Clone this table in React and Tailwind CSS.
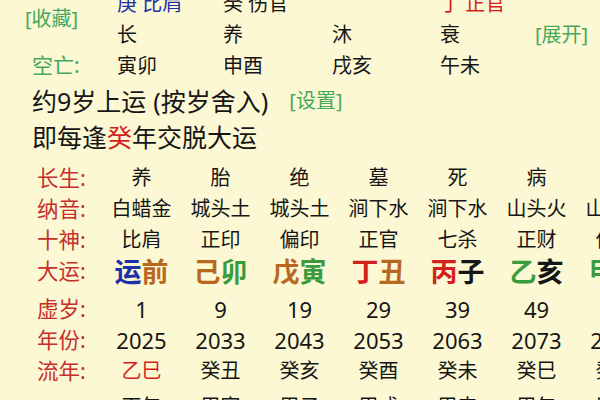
import React from 'react';

const red = 'text-[#c62f2c]';
const green = 'text-[#47a85c]';
const C = {
  blue: 'text-[#1f2fa8]',
  brown: 'text-[#b9681f]',
  green: 'text-[#3a9b3e]',
  red: 'text-[#d41f1f]',
  black: 'text-[#161616]',
};

const tableRows = [
  { label: '长生:', cells: ['养', '胎', '绝', '墓', '死', '病', '衰'] },
  { label: '纳音:', cells: ['白蜡金', '城头土', '城头土', '涧下水', '涧下水', '山头火', '山头火'] },
  { label: '十神:', cells: ['比肩', '正印', '偏印', '正官', '七杀', '正财', '偏财'] },
];

const dayun = [
  [['运', 'blue'], ['前', 'brown']],
  [['己', 'brown'], ['卯', 'green']],
  [['戊', 'brown'], ['寅', 'green']],
  [['丁', 'red'], ['丑', 'brown']],
  [['丙', 'red'], ['子', 'black']],
  [['乙', 'green'], ['亥', 'black']],
  [['甲', 'green'], ['戌', 'brown']],
];

const lowerRows = [
  { label: '虚岁:', cells: ['1', '9', '19', '29', '39', '49', '59'], num: true },
  { label: '年份:', cells: ['2025', '2033', '2043', '2053', '2063', '2073', '2083'], num: true },
  { label: '流年:', cells: ['乙巳', '癸丑', '癸亥', '癸酉', '癸未', '癸巳', '癸卯'], firstRed: true },
  { label: '', cells: ['丙午', '甲寅', '甲子', '甲戌', '甲申', '甲午', '甲辰'], last: true },
];

function Row({ label, children, h = 'h-[31px]', className = '' }) {
  return (
    <div className={`grid grid-cols-[102px_repeat(7,79px)] items-center ${h} ${className}`}>
      <div className={`pl-[37px] text-[21.5px] ${red}`}>{label}</div>
      {children}
    </div>
  );
}

export default function App() {
  return (
    <div
      className="w-[600px] h-[400px] overflow-hidden bg-[#fcf8d3] text-[#161616]"
      style={{ fontFamily: '"Noto Sans", "Noto Sans CJK SC", sans-serif' }}
    >
      {/* top pillars */}
      <div className="-mt-[12px] grid grid-cols-[117px_106px_109px_108px_95px_1fr] grid-rows-[31px_31px_31px] items-center text-[20px] leading-none">
        <div className={`row-span-2 pl-[25px] text-[20px] ${green}`}>[收藏]</div>
        <div className="text-[#1f2fa8]">庚 比肩</div>
        <div>癸 伤官</div>
        <div></div>
        <div className="text-[#d41f1f]">丁 正官</div>
        <div></div>
        <div>长</div>
        <div>养</div>
        <div>沐</div>
        <div>衰</div>
        <div className={`text-[20px] ${green}`}>[展开]</div>
        <div className={`pl-[32px] text-[21px] ${green}`}>空亡:</div>
        <div>寅卯</div>
        <div>申酉</div>
        <div>戌亥</div>
        <div>午未</div>
      </div>

      <div className="mt-[2px] pl-[32px] text-[25px] leading-[36px]">
        <div className="flex items-center whitespace-nowrap">
          <span>约9岁上运</span>
          <span className="ml-[7px]">(按岁舍入)</span>
          <span className={`ml-[21px] text-[20px] ${green}`}>[设置]</span>
        </div>
        <div>
          即每逢<span className="text-[#d41f1f]">癸</span>年交脱大运
        </div>
      </div>

      <div className="mt-[7px]">
        {tableRows.map((r) => (
          <Row key={r.label} label={r.label}>
            {r.cells.map((c, i) => (
              <div key={i} className="text-center text-[20px] whitespace-nowrap">{c}</div>
            ))}
          </Row>
        ))}
        <Row label="大运:" h="h-[33px]">
          {dayun.map((pair, i) => (
            <div key={i} className="text-center text-[27px] font-semibold whitespace-nowrap leading-none">
              {pair.map(([ch, col]) => (
                <span key={ch} className={C[col]}>{ch}</span>
              ))}
            </div>
          ))}
        </Row>
        <div className="h-[5px]" />
        {lowerRows.map((r, ri) => (
          <Row key={ri} label={r.label} className={r.last ? 'mt-[5px]' : ''}>
            {r.cells.map((c, i) => (
              <div
                key={i}
                className={`text-center whitespace-nowrap ${r.num ? 'text-[22px]' : 'text-[20px]'} ${
                  r.firstRed && i === 0 ? 'text-[#d41f1f]' : ''
                }`}
              >
                {c}
              </div>
            ))}
          </Row>
        ))}
      </div>
    </div>
  );
}
